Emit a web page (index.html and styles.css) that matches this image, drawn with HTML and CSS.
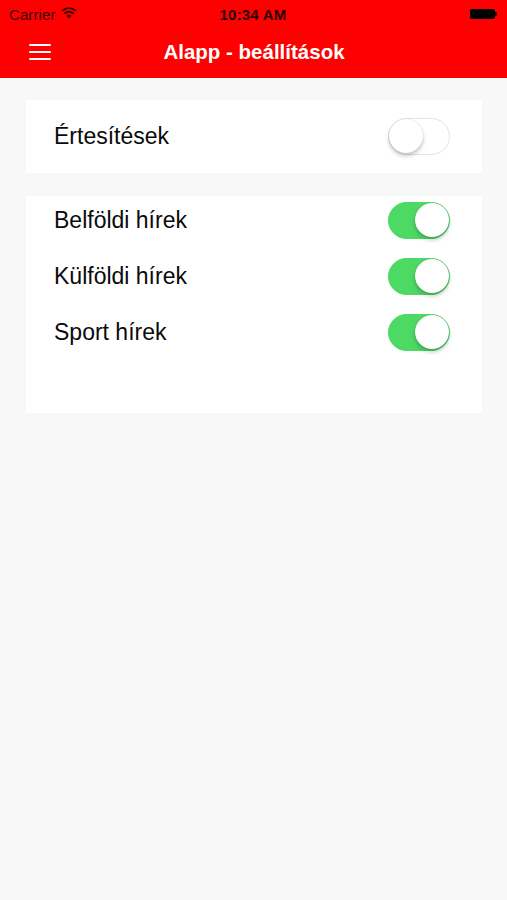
FILE: index.html
```html
<!DOCTYPE html>
<html>
<head>
<meta charset="utf-8">
<link rel="stylesheet" href="styles.css">
</head>
<body>
<div class="header">
  <div class="statusbar">
    <div class="sb-left">
      <span class="carrier">Carrier</span>
      <svg class="wifi" width="16" height="12" viewBox="0 0 16 12">
        <path d="M8 11.5 L5.6 8.8 A3.4 3.4 0 0 1 10.4 8.8 Z" fill="#3a0000"/>
        <path d="M3.6 6.6 A6.3 6.3 0 0 1 12.4 6.6" stroke="#3a0000" stroke-width="1.9" fill="none"/>
        <path d="M1.1 3.9 A10 10 0 0 1 14.9 3.9" stroke="#3a0000" stroke-width="1.9" fill="none"/>
      </svg>
    </div>
    <div class="time">10:34 AM</div>
    <div class="sb-right">
      <div class="battery"><div class="battery-fill"></div></div>
      <div class="battery-nub"></div>
    </div>
  </div>
  <div class="navbar">
    <div class="hamburger"><span></span><span></span><span></span></div>
    <div class="title">Alapp - beállítások</div>
  </div>
</div>
<div class="content">
  <div class="card card-single">
    <div class="row"><span class="label">Értesítések</span><span class="switch"><span class="knob"></span></span></div>
  </div>
  <div class="card card-list">
    <div class="row"><span class="label">Belföldi hírek</span><span class="switch on"><span class="knob"></span></span></div>
    <div class="row"><span class="label">Külföldi hírek</span><span class="switch on"><span class="knob"></span></span></div>
    <div class="row"><span class="label">Sport hírek</span><span class="switch on"><span class="knob"></span></span></div>
  </div>
</div>
</body>
</html>
```

FILE: styles.css
```css
html, body {
  margin: 0;
  padding: 0;
}
body {
  width: 507px;
  height: 900px;
  background: #f8f8f8;
  font-family: "Liberation Sans", Arial, sans-serif;
  overflow: hidden;
}
.header {
  background: #ff0000;
  height: 78px;
  display: flex;
  flex-direction: column;
}
.statusbar {
  height: 28px;
  display: flex;
  align-items: center;
  justify-content: space-between;
  padding: 0 10px 0 9px;
  position: relative;
}
.sb-left {
  display: flex;
  align-items: center;
  gap: 5px;
  width: 120px;
}
.carrier {
  font-size: 15px;
  color: #3a0000;
  letter-spacing: 0.1px;
}
.wifi {
  margin-top: -2px;
}
.time {
  font-size: 15px;
  font-weight: bold;
  color: #2a0000;
  letter-spacing: 0.2px;
}
.sb-right {
  width: 120px;
  display: flex;
  justify-content: flex-end;
  align-items: center;
}
.battery {
  width: 25px;
  height: 10px;
  border: 1px solid #000;
  border-radius: 2px;
  box-sizing: border-box;
  padding: 1px;
  background: #000;
}
.battery-nub {
  width: 2px;
  height: 4px;
  background: #300;
  border-radius: 0 1px 1px 0;
}
.navbar {
  flex: 1;
  display: flex;
  align-items: center;
  position: relative;
  padding-bottom: 2px;
}
.hamburger {
  margin-left: 29px;
  width: 22px;
  display: flex;
  flex-direction: column;
  gap: 5px;
}
.hamburger span {
  display: block;
  height: 2px;
  background: #fff;
  border-radius: 1px;
}
.title {
  position: absolute;
  left: 0;
  right: 0;
  text-align: center;
  color: #fff;
  font-size: 20.5px;
  font-weight: bold;
  pointer-events: none;
  padding-left: 1px;
  top: 12px;
}
.content {
  padding: 22px 25px 0 26px;
  display: flex;
  flex-direction: column;
  gap: 23px;
}
.card {
  background: #fff;
}
.card-single {
  height: 73px;
  display: flex;
  align-items: center;
}
.card-single .row {
  flex: 1;
}
.card-list {
  display: flex;
  flex-direction: column;
  gap: 8px;
  padding-bottom: 57px;
}
.row {
  height: 48px;
  display: flex;
  align-items: center;
  justify-content: space-between;
  padding: 0 32px 0 28px;
}
.label {
  font-size: 23px;
  color: #0a0a0a;
}
.switch {
  width: 62px;
  height: 37px;
  border-radius: 19px;
  box-sizing: border-box;
  border: 1.5px solid #e4e4e4;
  background: #fff;
  position: relative;
  display: block;
}
.switch .knob {
  position: absolute;
  top: 0;
  left: 0;
  width: 34px;
  height: 34px;
  border-radius: 50%;
  background: #fff;
  box-shadow: 0 3px 4px rgba(0,0,0,0.22), 0 0 1px rgba(0,0,0,0.2);
}
.switch.on {
  background: #4cd964;
  border-color: #4cd964;
}
.switch.on .knob {
  left: auto;
  right: 0;
}
```
